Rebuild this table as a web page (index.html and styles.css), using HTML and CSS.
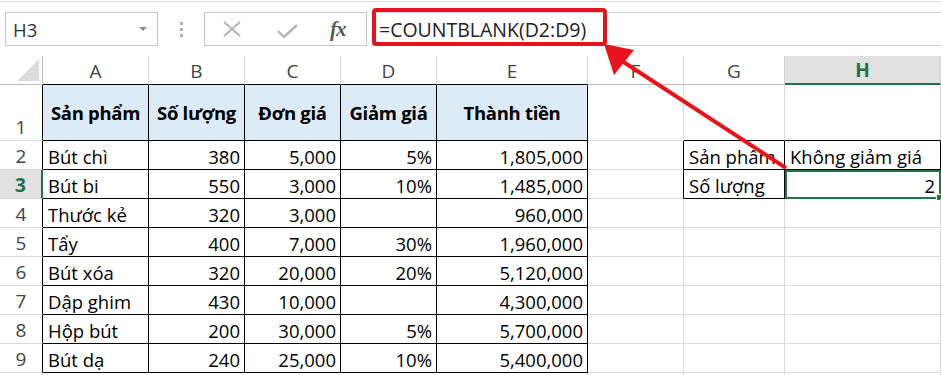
FILE: index.html
```html
<!DOCTYPE html>
<html lang="vi">
<head>
<meta charset="utf-8">
<title>COUNTBLANK</title>
<link rel="stylesheet" href="styles.css">
</head>
<body>
<div class="app">
  <div class="toolbar">
    <div class="namebox"><span class="nb-text">H3</span><span class="nb-arrow"></span></div>
    <div class="grip"><i></i><i></i><i></i></div>
    <div class="fxbox">
      <svg class="ic-x" width="18" height="16" viewBox="0 0 18 16"><path d="M1 1 L17 15 M17 1 L1 15" stroke="#b4b4b4" stroke-width="2" fill="none"/></svg>
      <svg class="ic-check" width="21" height="14" viewBox="0 0 21 14"><path d="M1 7 L7 13 L20 1" stroke="#b4b4b4" stroke-width="2.4" fill="none"/></svg>
      <span class="fx">fx</span>
    </div>
    <div class="formula">=COUNTBLANK(D2:D9)</div>
  </div>

  <div class="sheet">
    <div class="c ch corner"><span class="tri"></span></div>
    <div class="c ch bb">A</div>
    <div class="c ch bb">B</div>
    <div class="c ch bb">C</div>
    <div class="c ch bb">D</div>
    <div class="c ch bb">E</div>
    <div class="c ch">F</div>
    <div class="c ch">G</div>
    <div class="c ch sel-col">H</div>

    <div class="c rh br">1</div>
    <div class="c th br bb">Sản phẩm</div>
    <div class="c th br bb">Số lượng</div>
    <div class="c th br bb">Đơn giá</div>
    <div class="c th br bb">Giảm giá</div>
    <div class="c th br bb">Thành tiền</div>
    <div class="c"></div>
    <div class="c bb"></div>
    <div class="c bb"></div>

    <div class="c rh br">2</div>
    <div class="c br bb">Bút chì</div>
    <div class="c n br bb">380</div>
    <div class="c n br bb">5,000</div>
    <div class="c n br bb">5%</div>
    <div class="c n br bb">1,805,000</div>
    <div class="c br"></div>
    <div class="c br bb">Sản phẩm</div>
    <div class="c br bb">Không giảm giá</div>

    <div class="c rh sel-row">3</div>
    <div class="c br bb">Bút bi</div>
    <div class="c n br bb">550</div>
    <div class="c n br bb">3,000</div>
    <div class="c n br bb">10%</div>
    <div class="c n br bb">1,485,000</div>
    <div class="c br"></div>
    <div class="c br bb">Số lượng</div>
    <div class="c n br bb active">2<span class="handle"></span></div>

    <div class="c rh br">4</div>
    <div class="c br bb">Thước kẻ</div>
    <div class="c n br bb">320</div>
    <div class="c n br bb">3,000</div>
    <div class="c n br bb"></div>
    <div class="c n br bb">960,000</div>
    <div class="c"></div>
    <div class="c"></div>
    <div class="c"></div>

    <div class="c rh br">5</div>
    <div class="c br bb">Tẩy</div>
    <div class="c n br bb">400</div>
    <div class="c n br bb">7,000</div>
    <div class="c n br bb">30%</div>
    <div class="c n br bb">1,960,000</div>
    <div class="c"></div>
    <div class="c"></div>
    <div class="c"></div>

    <div class="c rh br">6</div>
    <div class="c br bb">Bút xóa</div>
    <div class="c n br bb">320</div>
    <div class="c n br bb">20,000</div>
    <div class="c n br bb">20%</div>
    <div class="c n br bb">5,120,000</div>
    <div class="c"></div>
    <div class="c"></div>
    <div class="c"></div>

    <div class="c rh br">7</div>
    <div class="c br bb">Dập ghim</div>
    <div class="c n br bb">430</div>
    <div class="c n br bb">10,000</div>
    <div class="c n br bb"></div>
    <div class="c n br bb">4,300,000</div>
    <div class="c"></div>
    <div class="c"></div>
    <div class="c"></div>

    <div class="c rh br">8</div>
    <div class="c br bb">Hộp bút</div>
    <div class="c n br bb">200</div>
    <div class="c n br bb">30,000</div>
    <div class="c n br bb">5%</div>
    <div class="c n br bb">5,700,000</div>
    <div class="c"></div>
    <div class="c"></div>
    <div class="c"></div>

    <div class="c rh br">9</div>
    <div class="c br bb">Bút dạ</div>
    <div class="c n br bb">240</div>
    <div class="c n br bb">25,000</div>
    <div class="c n br bb">10%</div>
    <div class="c n br bb">5,400,000</div>
    <div class="c"></div>
    <div class="c"></div>
    <div class="c"></div>

    <div class="c rh"></div>
    <div class="c"></div>
    <div class="c"></div>
    <div class="c"></div>
    <div class="c"></div>
    <div class="c"></div>
    <div class="c"></div>
    <div class="c"></div>
    <div class="c"></div>
  </div>

  <svg class="annot" width="941" height="375" viewBox="0 0 941 375">
    <rect x="374" y="10" width="231" height="34" rx="2" fill="none" stroke="#e8141b" stroke-width="4"/>
    <line x1="786" y1="168" x2="622" y2="61" stroke="#e8141b" stroke-width="4"/>
    <polygon points="604,44 634,50 614,75" fill="#e8141b"/>
  </svg>
</div>
</body>
</html>
```

FILE: styles.css
```css
html, body {
  margin: 0;
  padding: 0;
  background: #fff;
}

.app {
  position: relative;
  width: 941px;
  height: 375px;
  overflow: hidden;
  font-family: "Open Sans", "Noto Sans", sans-serif;
  color: #000;
}

.toolbar {
  margin-top: 1px;
  border-top: 1px solid #d9d9d9;
  height: 55px;
  display: flex;
  align-items: flex-start;
  padding-top: 10px;
  box-sizing: border-box;
}

.namebox {
  margin-left: 5px;
  width: 153px;
  height: 34px;
  box-sizing: border-box;
  border: 1px solid #c6c6c6;
  display: flex;
  align-items: center;
  justify-content: space-between;
  padding: 0 10px 0 7px;
}

.nb-text {
  font-size: 18.5px;
  color: #333;
}

.nb-arrow {
  width: 0;
  height: 0;
  border-left: 4px solid transparent;
  border-right: 4px solid transparent;
  border-top: 4px solid #8a8a8a;
}

.grip {
  width: 46px;
  height: 34px;
  display: flex;
  flex-direction: column;
  align-items: center;
  justify-content: center;
  gap: 3px;
}

.grip i {
  display: block;
  width: 3px;
  height: 3px;
  background: #b0b0b0;
}

.fxbox {
  width: 163px;
  height: 34px;
  box-sizing: border-box;
  border: 1px solid #c6c6c6;
  display: flex;
  align-items: center;
  padding-left: 18px;
}

.ic-x { margin-right: 36px; }
.ic-check { margin-right: 32px; margin-top: 3px; }

.fx {
  font-family: "Liberation Serif", "DejaVu Serif", serif;
  font-style: italic;
  font-weight: 700;
  font-size: 21px;
  color: #5a5a5a;
  letter-spacing: -1px;
}

.formula {
  margin-left: 4px;
  flex: 1;
  height: 34px;
  box-sizing: border-box;
  border-top: 1px solid #d0d0d0;
  border-bottom: 1px solid #d0d0d0;
  display: flex;
  align-items: center;
  padding-left: 8px;
  font-size: 19.5px;
  color: #222;
}

.sheet {
  display: grid;
  grid-template-columns: 43px 106px 96px 96px 96px 151px 96px 101px 156px;
  grid-template-rows: 29px 56px repeat(8, 29px) 29px;
  font-size: 18.5px;
}

.c {
  box-sizing: border-box;
  border-right: 1px solid #dadada;
  border-bottom: 1px solid #dadada;
  display: flex;
  align-items: flex-end;
  padding: 0 4px 0 5px;
  line-height: 25px;
  white-space: nowrap;
  overflow: hidden;
  position: relative;
}

.n { justify-content: flex-end; }

.br { border-right-color: #000; }
.bb { border-bottom-color: #000; }

.ch {
  justify-content: center;
  color: #444;
  border-right-color: #d4d4d4;
  border-bottom-color: #bdbdbd;
  padding: 0;
  font-size: 19px;
}

.ch.bb { border-bottom-color: #000; }

.corner {
  justify-content: flex-end;
  align-items: flex-end;
  padding: 0 3px 3px 0;
  border-right-color: #bdbdbd;
}

.tri {
  width: 0;
  height: 0;
  border-left: 22px solid transparent;
  border-bottom: 22px solid #dcdcdc;
}

.sel-col {
  background: #e1e1e1;
  color: #217346;
  font-weight: 700;
  border-bottom: 2px solid #217346;
}

.rh {
  justify-content: center;
  color: #444;
  padding: 0;
  border-right-color: #bdbdbd;
  font-size: 19px;
}

.rh.br { border-right-color: #000; }

.sel-row {
  background: #e1e1e1;
  color: #217346;
  font-weight: 700;
  border-right: 2px solid #217346;
}

.th {
  background: #ddebf7;
  font-weight: 700;
  justify-content: center;
  align-items: center;
  padding: 0;
  letter-spacing: -0.3px;
}

.active {
  outline: 2px solid #217346;
  outline-offset: -2px;
  overflow: visible;
  padding-right: 5px;
}

.handle {
  position: absolute;
  right: -3px;
  bottom: -3px;
  width: 5px;
  height: 5px;
  background: #217346;
  border: 1px solid #fff;
}

.annot {
  position: absolute;
  left: 0;
  top: 0;
  pointer-events: none;
}
```
